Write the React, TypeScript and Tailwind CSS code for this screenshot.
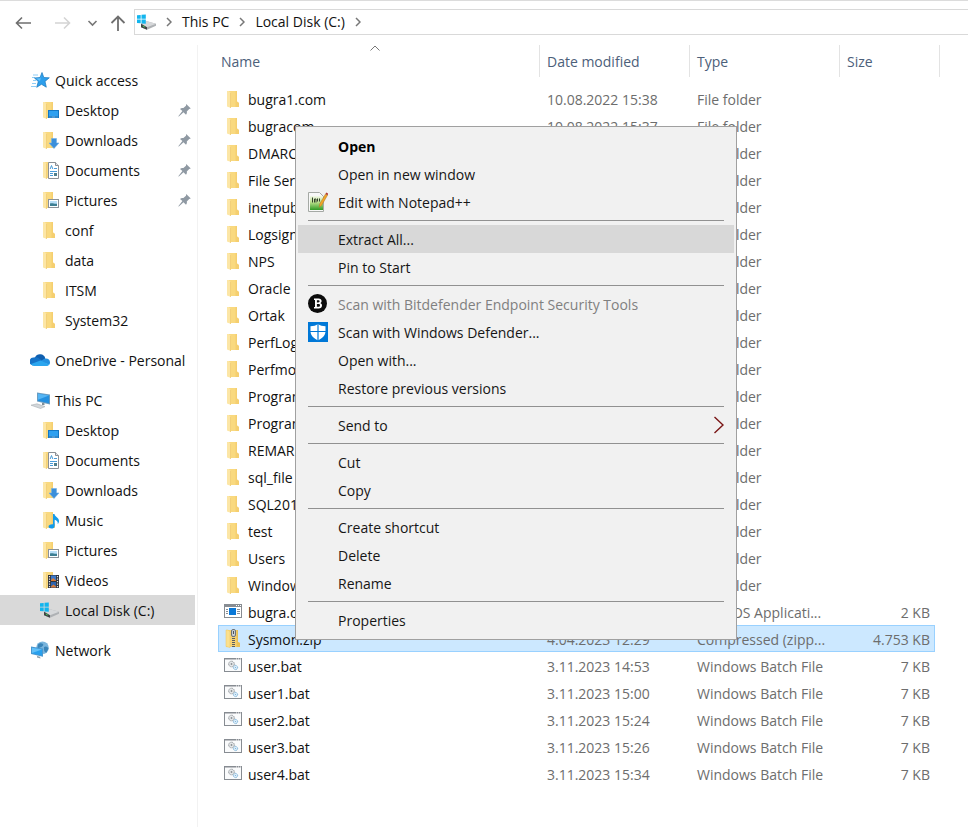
import type { ReactNode } from "react";

/* ---------- icons ---------- */

function Icon({ children, className = "" }: { children: ReactNode; className?: string }) {
  return (
    <svg viewBox="0 0 20 20" width="20" height="20" aria-hidden="true" className={`shrink-0 ${className}`}>
      {children}
    </svg>
  );
}

function FolderShape() {
  return (
    <>
      <path d="M4 2h9v10.500l2 1.500v4H4z" fill="#f9d97f" />
      <path d="M11.500 2H13v10.500l2 1.500v4h-3.500z" fill="#f5cf70" />
      <path d="M3 2h1.800L7 4v15l-4-1.500z" fill="#fce6a6" />
      <path d="M6.200 3.500L7 4v15l-.8-.3z" fill="#f0cb70" />
    </>
  );
}

const FolderIcon = () => (
  <Icon>
    <FolderShape />
  </Icon>
);

const DesktopIcon = () => (
  <Icon>
    <FolderShape />
    <rect x="8" y="10" width="11" height="8" fill="#1377c4" />
    <rect x="9" y="11" width="9" height="5" fill="#2ea0f0" />
    <path d="M9.500 17h1M11.500 17h4M16.500 17h1" stroke="#d6efff" strokeWidth="0.600" />
  </Icon>
);

const DownloadsIcon = () => (
  <Icon>
    <FolderShape />
    <path d="M11.500 8.500h5v4.500h2.500l-5 5.500-5-5.500h2.500z" fill="#3b8fdb" stroke="#6fb0ea" strokeWidth="0.600" />
  </Icon>
);

const DocumentsIcon = () => (
  <Icon>
    <FolderShape />
    <path d="M8.500 2.500h7l3 3v13h-10z" fill="#fff" stroke="#8b8f94" />
    <path d="M15.500 2.500v3h3" fill="#e3e6e9" stroke="#8b8f94" />
    <path d="M10.200 9l1.300-3.500L12.800 9M14 8.500h3M10 11.500h7M10 13.500h3M10 15.500h3" stroke="#4a9bd8" strokeWidth="1" fill="none" />
    <rect x="14" y="13" width="3" height="3" fill="#4f7f8c" />
  </Icon>
);

const PicturesIcon = () => (
  <Icon>
    <FolderShape />
    <rect x="8.500" y="9.500" width="10" height="8" fill="#fff" stroke="#8b9299" />
    <rect x="10" y="11" width="7" height="5" fill="#b8def6" />
    <path d="M10 13.500c2-1 4 .5 7 .2V16h-7z" fill="#3d7f93" />
  </Icon>
);

const MusicIcon = () => (
  <Icon>
    <FolderShape />
    <path d="M13 4h1.500c.2 3 4.500 3.500 4.500 7 0 1.300-.5 2.200-1.300 3 .5-2.500-1.200-3.600-3-4.200V16c0 1.700-1.600 2.600-3.300 2.600S8.500 17.800 8.500 16.600c0-1.400 1.700-2.500 4.500-2.300z" fill="#139bea" />
  </Icon>
);

const VideosIcon = () => (
  <Icon>
    <FolderShape />
    <rect x="8" y="5" width="11" height="13" fill="#30343c" />
    <path d="M9.500 6v12M17.500 6v12" stroke="#e8e8e8" strokeWidth="1.200" strokeDasharray="1.300 1.200" />
    <rect x="11" y="5.500" width="5" height="5.500" fill="#3c78c8" />
    <rect x="11" y="12" width="5" height="5.500" fill="#2d62ad" />
    <path d="M11 10l2-2 3 2.500V11h-5zM11 16.500l2.500-2 2.500 2v1h-5z" fill="#d87a36" />
  </Icon>
);

const DriveIcon = () => (
  <Icon>
    <path d="M4 11.500l6-2.300 9 2.600v1.900L10 17.800 4 15.300z" fill="#aeb1b4" />
    <path d="M4 11.500l6-2.300 9 2.600-9 3.500z" fill="#d6d8da" />
    <path d="M4 11.700l6 3.600v2.500l-6-2.500z" fill="#3f4346" />
    <path d="M5.800 14l2 1.100" stroke="#46d35a" strokeWidth="1" />
    <path d="M0 3.200l3.700-.3v3.800H0zM4.500 2.800L8.800 2.500v4.200H4.500zM0 7.500h3.700v3.800L0 11zM4.500 7.500h4.300v4.200l-4.300-.3z" fill="#12b5ee" />
  </Icon>
);

const StarIcon = () => (
  <Icon>
    <path d="M3 5h5M2 7.500h3M3 10.500h3M2 13.500h4M1 16.500h5" stroke="#8fcdf6" strokeWidth="1" />
    <path d="M12 2.500l1.800 5 5.500.3-4.300 3.600 1.300 5.800-4.800-2.900-4.800 3 1.600-5.700L4.500 8l5.500-.5z" fill="#2d9fec" stroke="#1877bd" strokeWidth="0.700" />
    <path d="M12 3.500l-1.500 4.700L6 8.600l4 2.400z" fill="#63c0f8" />
  </Icon>
);

const CloudIcon = () => (
  <Icon>
    <path d="M5 7.500a5.500 5.500 0 0110.300.8L12 14 3 10z" fill="#0f5fb0" />
    <path d="M4.200 7.500c2-.5 4 .2 5.200 1.200l5.100 3.300L3 15.500A4 4 0 014.200 7.500z" fill="#1673c8" />
    <path d="M10 11.500l4-2.600c3-1.400 6 .5 6 3.500 0 .9-.3 1.700-.8 2.300z" fill="#2390e0" />
    <path d="M1 14l9.500-3.500 8.800 4c-.8 1-1.800 1.500-3 1.500H4.200C2.800 16 1.700 15.300 1 14z" fill="#2ba6ef" />
  </Icon>
);

const ComputerIcon = () => (
  <Icon>
    <path d="M7 2.500l13 2v10L7 11.500z" fill="#6a9cc0" />
    <path d="M8 3.700l11 1.700v7.800L8 10.700z" fill="#2490e0" />
    <path d="M8 3.700l11 1.700-11 4.300z" fill="#55b5f4" />
    <path d="M12 12.700l2.500.5V15h-2.500z" fill="#7e8f9a" />
    <path d="M1 15.200l6-1.400 8 2.800-4.500 1.900z" fill="#d3d7da" stroke="#a8aeb3" strokeWidth="0.600" />
  </Icon>
);

const NetworkIcon = () => (
  <Icon>
    <circle cx="12.500" cy="7.800" r="6.300" fill="#79b4dc" />
    <path d="M8 4.500c2-2 4-1.500 5-.5s-1 3-3 3.500l-2.500 1zM14 7c2-1.500 4 0 4.500 1.500l-2 4c-2 0-3-2-2.500-5.500z" fill="#3a84b8" />
    <path d="M1 6.500l12 2v8.200L1 14z" fill="#4a97cf" />
    <path d="M2 7.700l10 1.700v6L2 13.200z" fill="#27a0ee" />
    <path d="M2 7.700l10 1.700-10 3.500z" fill="#63c0f8" />
    <path d="M7 16l3 .7.500 1.800-3.500-1z" fill="#8e9da8" />
  </Icon>
);

const ComAppIcon = () => (
  <Icon>
    <rect x="0.500" y="2.500" width="17" height="13" fill="#fff" stroke="#878c92" />
    <path d="M1 4h16" stroke="#878c92" strokeWidth="2" />
    <path d="M12 3.500h1M14 3.500h1M16 3.500h1" stroke="#fff" />
    <rect x="5" y="6" width="7" height="7" fill="#0a78d7" />
    <path d="M2 7.500h2M2 9.500h2M2 11.500h2M13 7.500h3M13 9.500h3M13 11.500h3" stroke="#8a8f95" />
  </Icon>
);

const ZipIcon = () => (
  <Icon>
    <path d="M2 1h12v12l2 1v4H2z" fill="#f6d274" />
    <path d="M2 1h2l2 1.500V18.500L2 17.500z" fill="#fbe08d" stroke="#efc65c" strokeWidth="0.500" />
    <path d="M12.500 1H14v12l2 1v4h-3.500z" fill="#e9bf55" />
    <path d="M9.500 1v18" stroke="#5a5f64" strokeWidth="3" strokeDasharray="1 1" />
    <rect x="7.500" y="0.500" width="4" height="7" rx="1.500" fill="#c9ced2" stroke="#6c7278" />
    <path d="M9.500 2v3" stroke="#4e5358" />
  </Icon>
);

const BatchIcon = () => (
  <Icon>
    <rect x="0.500" y="2.500" width="17" height="13" fill="#fafbfc" stroke="#878c92" />
    <path d="M1 3h16" stroke="#878c92" />
    <path d="M12 3h1M14 3h1M16 3h1" stroke="#fff" />
    <circle cx="7.500" cy="8" r="2.800" fill="#e4e7e9" stroke="#8b9094" strokeDasharray="1 0.500" />
    <circle cx="7.500" cy="8" r="0.900" fill="#8b9094" />
    <circle cx="11.500" cy="11.500" r="2.100" fill="#deeefa" stroke="#74aed6" strokeDasharray="1 0.400" />
    <circle cx="11.500" cy="11.500" r="0.600" fill="#74aed6" />
  </Icon>
);

const NotepadIcon = () => (
  <Icon>
    <defs>
      <linearGradient id="npp" x1="0" y1="0" x2="0" y2="1">
        <stop offset="0" stopColor="#f3f8ea" />
        <stop offset="0.450" stopColor="#b9e08a" />
        <stop offset="1" stopColor="#2f9a24" />
      </linearGradient>
    </defs>
    <path d="M0.500 0.500h11l4 4v15h-15z" fill="#f8f8f8" stroke="#a5a9a5" />
    <path d="M2 4h13v14H2z" fill="url(#npp)" />
    <path d="M4.500 5.500v5M6.500 10.500V7h1.500v3.500M9.500 6.500v3M11.500 6.500v3" stroke="#33402c" fill="none" />
    <path d="M17.500 2l2 1.200-5.800 10-2.400 2 .4-3.200z" fill="#f2a628" stroke="#a8742a" strokeWidth="0.500" />
    <path d="M17.500 2l.8-1.500 2 1.200-.8 1.500z" fill="#b13a32" />
  </Icon>
);

const BitdefenderIcon = () => (
  <Icon>
    <circle cx="9.500" cy="9.500" r="9.500" fill="#0c0c0c" />
    <path fillRule="evenodd" d="M6 4.500h4.500c2 0 3.100 1 3.100 2.500 0 1-.5 1.700-1.300 2.100 1 .4 1.700 1.200 1.700 2.400 0 1.800-1.300 3-3.400 3H6v-1.600h1V6H6zM8.900 6.200v2.200h1.300c.9 0 1.400-.4 1.400-1.100s-.5-1.100-1.400-1.100zM8.900 10v2.800h1.500c1 0 1.600-.5 1.600-1.400S11.400 10 10.400 10z" fill="#fff" />
  </Icon>
);

const DefenderIcon = () => (
  <Icon>
    <rect width="20" height="20" fill="#0078d7" />
    <path d="M10 2c2 1.500 4.500 2.200 7.500 2.200V9c0 4.200-2.800 7.200-7.500 9.300C5.300 16.200 2.500 13.200 2.500 9V4.200C5.500 4.200 8 3.500 10 2z" fill="#fff" />
    <path d="M10 1.500v17M2 9.500h16" stroke="#0078d7" strokeWidth="1.200" />
  </Icon>
);

const PinIcon = () => (
  <svg viewBox="0 0 13 13" width="13" height="13" aria-hidden="true" className="ml-auto shrink-0">
    <path d="M8.200 0l4.600 4.400-1.600.5-2.400 2.600c.3 1.300 0 2.300-.8 3.200L5.500 8.300.8 12.600l-.5-.4L4.400 7 2 4.900c1-.8 2.200-1.100 3.400-.8L8 1.700z" fill="#8f99a3" />
  </svg>
);

const Crumb = () => (
  <svg viewBox="0 0 6 10" width="6" height="10" aria-hidden="true" className="shrink-0">
    <path d="M1 1l4 4-4 4" fill="none" stroke="#777" strokeWidth="1.500" />
  </svg>
);

/* ---------- data ---------- */

type Place = { label: string; icon: ReactNode; root?: boolean; pinned?: boolean; current?: boolean };

const places: Place[][] = [
  [
    { label: "Quick access", icon: <StarIcon />, root: true },
    { label: "Desktop", icon: <DesktopIcon />, pinned: true },
    { label: "Downloads", icon: <DownloadsIcon />, pinned: true },
    { label: "Documents", icon: <DocumentsIcon />, pinned: true },
    { label: "Pictures", icon: <PicturesIcon />, pinned: true },
    { label: "conf", icon: <FolderIcon /> },
    { label: "data", icon: <FolderIcon /> },
    { label: "ITSM", icon: <FolderIcon /> },
    { label: "System32", icon: <FolderIcon /> },
  ],
  [{ label: "OneDrive - Personal", icon: <CloudIcon />, root: true }],
  [
    { label: "This PC", icon: <ComputerIcon />, root: true },
    { label: "Desktop", icon: <DesktopIcon /> },
    { label: "Documents", icon: <DocumentsIcon /> },
    { label: "Downloads", icon: <DownloadsIcon /> },
    { label: "Music", icon: <MusicIcon /> },
    { label: "Pictures", icon: <PicturesIcon /> },
    { label: "Videos", icon: <VideosIcon /> },
    { label: "Local Disk (C:)", icon: <DriveIcon />, current: true },
  ],
  [{ label: "Network", icon: <NetworkIcon />, root: true }],
];

type Entry = { name: string; date: string; type: string; size: string; icon: ReactNode; selected?: boolean };

const folder = (name: string, date = ""): Entry => ({ name, date, type: "File folder", size: "", icon: <FolderIcon /> });
const batch = (name: string, date: string): Entry => ({
  name,
  date,
  type: "Windows Batch File",
  size: "7 KB",
  icon: <BatchIcon />,
});

const entries: Entry[] = [
  folder("bugra1.com", "10.08.2022 15:38"),
  folder("bugracom", "10.08.2022 15:37"),
  folder("DMARC"),
  folder("File Server"),
  folder("inetpub"),
  folder("Logsign"),
  folder("NPS"),
  folder("Oracle"),
  folder("Ortak"),
  folder("PerfLogs"),
  folder("Perfmon"),
  folder("Program"),
  folder("Program"),
  folder("REMARK"),
  folder("sql_file"),
  folder("SQL2019"),
  folder("test"),
  folder("Users"),
  folder("Windows"),
  { name: "bugra.com", date: "", type: "MS-DOS Applicati...", size: "2 KB", icon: <ComAppIcon /> },
  { name: "Sysmon.zip", date: "4.04.2023 12:29", type: "Compressed (zipp...", size: "4.753 KB", icon: <ZipIcon />, selected: true },
  batch("user.bat", "3.11.2023 14:53"),
  batch("user1.bat", "3.11.2023 15:00"),
  batch("user2.bat", "3.11.2023 15:24"),
  batch("user3.bat", "3.11.2023 15:26"),
  batch("user4.bat", "3.11.2023 15:34"),
];

type Command = { label: string; icon?: ReactNode; bold?: boolean; active?: boolean; disabled?: boolean; submenu?: boolean };

const commands: Command[][] = [
  [{ label: "Open", bold: true }, { label: "Open in new window" }, { label: "Edit with Notepad++", icon: <NotepadIcon /> }],
  [{ label: "Extract All...", active: true }, { label: "Pin to Start" }],
  [
    { label: "Scan with Bitdefender Endpoint Security Tools", icon: <BitdefenderIcon />, disabled: true },
    { label: "Scan with Windows Defender...", icon: <DefenderIcon /> },
    { label: "Open with..." },
    { label: "Restore previous versions" },
  ],
  [{ label: "Send to", submenu: true }],
  [{ label: "Cut" }, { label: "Copy" }],
  [{ label: "Create shortcut" }, { label: "Delete" }, { label: "Rename" }],
  [{ label: "Properties" }],
];

/* ---------- sections ---------- */

function AddressBar() {
  return (
    <header className="flex h-[45px] items-start border-t border-[#dcdcdc] pt-2 pl-3.5">
      <nav aria-label="History" className="flex h-7 items-center">
        <button type="button" aria-label="Back" className="w-5">
          <Icon>
            <path d="M2 10h15M8 4.500L2.500 10 8 15.500" fill="none" stroke="#6f6f6f" strokeWidth="1.600" />
          </Icon>
        </button>
        <button type="button" aria-label="Forward" className="ml-[18px] w-5">
          <Icon>
            <path d="M3 10h15M12 4.500l5.500 5.500-5.500 5.500" fill="none" stroke="#d4d4d4" strokeWidth="1.600" />
          </Icon>
        </button>
        <button type="button" aria-label="Recent locations" className="ml-3.5 w-3">
          <svg viewBox="0 0 12 8" width="12" height="8" aria-hidden="true">
            <path d="M2.500 2L6.500 6l4-4" fill="none" stroke="#777" strokeWidth="1.600" />
          </svg>
        </button>
        <button type="button" aria-label="Up" className="ml-2.5 w-5">
          <Icon>
            <path d="M10 18V4M3.500 10L10 3.500l6.500 6.500" fill="none" stroke="#6f6f6f" strokeWidth="1.800" />
          </Icon>
        </button>
      </nav>
      <div className="ml-1.5 flex h-[26px] flex-1 items-center border border-r-0 border-[#d9d9d9] pl-0.5">
        <DriveIcon />
        <span className="ml-[9px] flex items-center gap-2.5">
          <Crumb />
          <button type="button">This PC</button>
          <Crumb />
          <button type="button">Local Disk (C:)</button>
          <Crumb />
        </span>
      </div>
    </header>
  );
}

function Sidebar() {
  return (
    <nav aria-label="Places" className="flex w-[198px] shrink-0 flex-col gap-2.5 border-r border-[#f2f2f2] pt-5 pr-0.5">
      {places.map((group, i) => (
        <ul key={i}>
          {group.map((p) => (
            <li key={p.label}>
              <a
                href="#"
                className={`flex h-[30px] items-center gap-[5px] pr-1 ${p.root ? "pl-[30px]" : "pl-10"} ${p.current ? "bg-[#d9d9d9]" : ""}`}
              >
                {p.icon}
                <span className="pt-0.5 whitespace-nowrap">{p.label}</span>
                {p.pinned && <PinIcon />}
              </a>
            </li>
          ))}
        </ul>
      ))}
    </nav>
  );
}

const headCell = "h-8 border-r border-[#e3e3e3] p-0 pt-0.5 text-left font-normal";

function FileTable() {
  return (
    <table className="w-full table-fixed border-separate border-spacing-0">
      <colgroup>
        <col />
        <col className="w-[150px]" />
        <col className="w-[150px]" />
        <col className="w-[95px]" />
        <col className="w-[5px]" />
      </colgroup>
      <thead className="text-[#4c607a]">
        <tr>
          <th className={`relative ${headCell}`} aria-sort="ascending">
            <button type="button" className="pl-[3px]">
              Name
            </button>
            <svg viewBox="0 0 10 6" width="10" height="6" aria-hidden="true" className="absolute top-0 left-1/2 -ml-2">
              <path d="M0.500 5.500L5 1l4.500 4.500" fill="none" stroke="#777" strokeWidth="1" />
            </svg>
          </th>
          <th className={headCell}>
            <button type="button" className="pl-[7px]">
              Date modified
            </button>
          </th>
          <th className={headCell}>
            <button type="button" className="pl-[7px]">
              Type
            </button>
          </th>
          <th className={headCell} colSpan={2}>
            <button type="button" className="pl-[7px]">
              Size
            </button>
          </th>
        </tr>
      </thead>
      <tbody className="text-[#6d6d6d]">
        <tr aria-hidden="true">
          <td className="h-2 p-0" colSpan={5} />
        </tr>
        {entries.map((e, i) => {
          const cell = `h-[27px] whitespace-nowrap overflow-hidden ${e.selected ? "border-y border-[#99d1ff] bg-[#cce8ff]" : ""}`;
          return (
            <tr key={i}>
              <td className={`${cell} p-0 ${e.selected ? "border-l pl-[5px]" : "pl-1.5"}`}>
                <span className="flex items-center gap-1 text-[#111]">
                  {e.icon}
                  <span className="pt-0.5">{e.name}</span>
                </span>
              </td>
              <td className={`${cell} p-0 pt-0.5 pl-[7px]`}>{e.date}</td>
              <td className={`${cell} p-0 pt-0.5 pl-[7px]`}>{e.type}</td>
              <td className={`${cell} p-0 pt-0.5 text-right ${e.selected ? "border-r pr-1" : "pr-[5px]"}`}>{e.size}</td>
              <td className="p-0" />
            </tr>
          );
        })}
      </tbody>
    </table>
  );
}

function ContextMenu() {
  return (
    <div
      role="menu"
      className="absolute top-[81px] left-[97px] w-[442px] border border-[#a0a0a0] bg-[#f1f1f1] px-0.5 py-[5px] text-[#161616]"
    >
      {commands.map((group, i) => (
        <div key={i} role="group">
          {i > 0 && <hr className="mx-2.5 my-1 border-t border-[#919191]" />}
          {group.map((c) => (
            <button
              key={c.label}
              type="button"
              role="menuitem"
              disabled={c.disabled}
              className={`flex h-7 w-full items-center gap-2.5 px-2.5 text-left ${c.active ? "bg-[#d8d8d8]" : ""} ${c.bold ? "font-bold text-black" : ""} ${c.disabled ? "text-[#808080]" : ""}`}
            >
              <span className="w-5 shrink-0">{c.icon}</span>
              <span className="pt-0.5">{c.label}</span>
              {c.submenu && (
                <svg viewBox="0 0 10 18" width="10" height="18" aria-hidden="true" className="ml-auto">
                  <path d="M0.500 1L9 9l-8.500 8" fill="none" stroke="#7a1616" strokeWidth="1.400" />
                </svg>
              )}
            </button>
          ))}
        </div>
      ))}
    </div>
  );
}

export default function App() {
  return (
    <div className="flex min-h-screen flex-col bg-white font-['Open_Sans','Noto_Sans',sans-serif] text-[14px] leading-5 text-[#111]">
      <AddressBar />
      <div className="flex flex-1">
        <Sidebar />
        <main className="relative min-w-0 flex-1 pr-7 pl-5">
          <FileTable />
          <ContextMenu />
        </main>
      </div>
    </div>
  );
}
